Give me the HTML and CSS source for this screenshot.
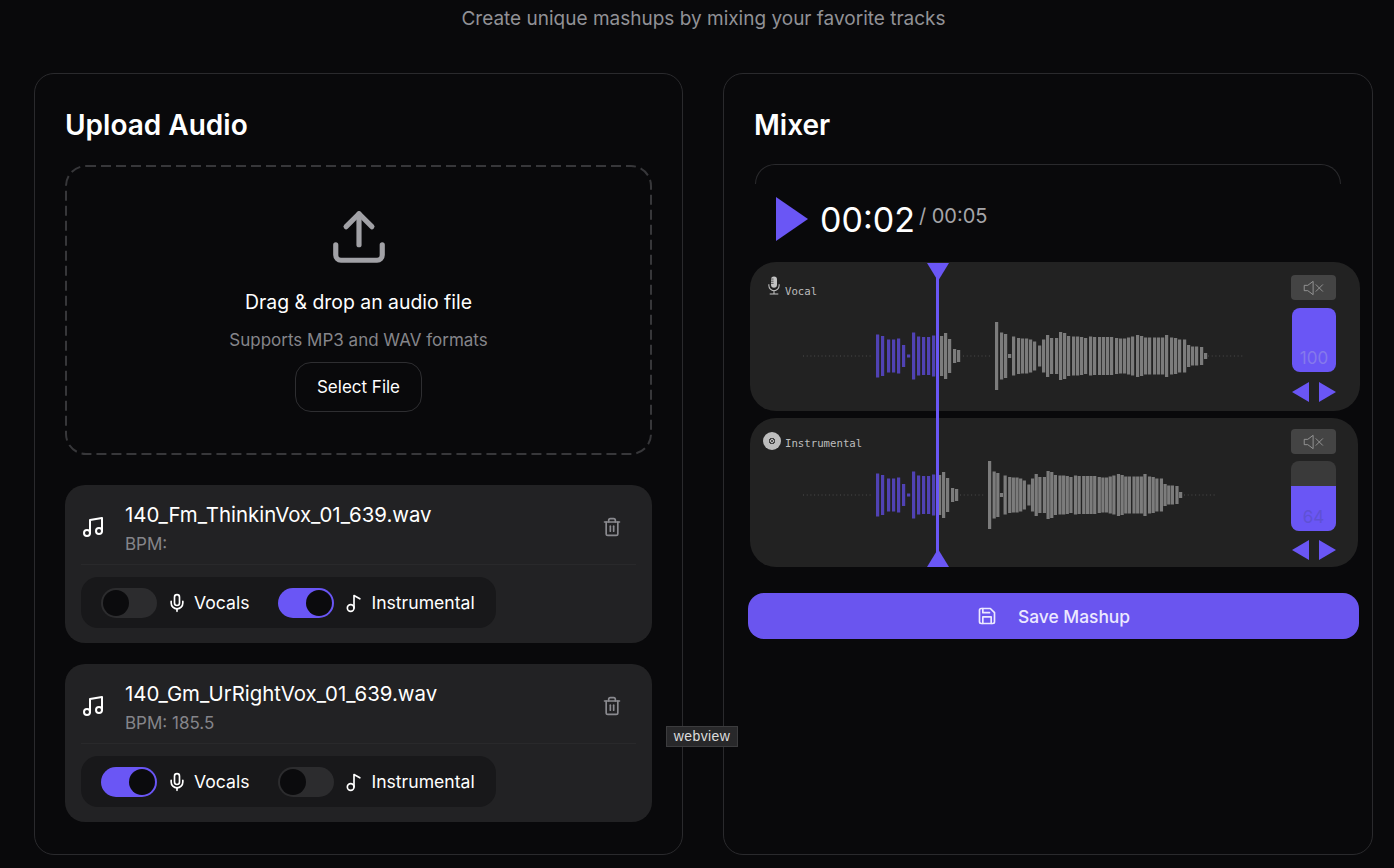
FILE: index.html
```html
<!DOCTYPE html>
<html>
  <head>
    <title>Mashup Maker</title>
    <link rel="stylesheet" href="styles.css">
  </head>
  <body>
    <p class="subtitle">Create unique mashups by mixing your favorite tracks</p>

    <div class="panels">
      <div class="panel">
        <h2>Upload Audio</h2>

        <div class="dropzone">
          <svg class="dash-border" viewBox="0 0 587 290"><rect x="1" y="1" width="585" height="288" rx="20"/></svg>
          <svg class="upload-icon" viewBox="0 0 24 24"><path d="M21 15v4a2 2 0 0 1-2 2H5a2 2 0 0 1-2-2v-4"/><polyline points="17 8 12 3 7 8"/><line x1="12" y1="3" x2="12" y2="15"/></svg>
          <div class="drop-title">Drag &amp; drop an audio file</div>
          <div class="drop-sub">Supports MP3 and WAV formats</div>
          <button class="select-btn">Select File</button>
        </div>

        <div class="file-card">
          <div class="file-head">
            <svg class="music-icon" viewBox="0 0 24 24"><path d="M9 18V5l12-2v13"/><circle cx="6" cy="18" r="3"/><circle cx="18" cy="16" r="3"/></svg>
            <div class="file-info">
              <div class="file-name">140_Fm_ThinkinVox_01_639.wav</div>
              <div class="file-bpm">BPM:</div>
            </div>
            <svg class="trash-icon" viewBox="0 0 24 24"><path d="M3 6h18"/><path d="M19 6v14a2 2 0 0 1-2 2H7a2 2 0 0 1-2-2V6"/><path d="M8 6V4a2 2 0 0 1 2-2h4a2 2 0 0 1 2 2v2"/><line x1="10" y1="11" x2="10" y2="17"/><line x1="14" y1="11" x2="14" y2="17"/></svg>
          </div>
          <div class="stems">
            <div class="stem">
              <span class="toggle"></span>
              <svg class="stem-icon" viewBox="0 0 24 24"><path d="M12 2a3 3 0 0 0-3 3v7a3 3 0 0 0 6 0V5a3 3 0 0 0-3-3Z"/><path d="M19 10v2a7 7 0 0 1-14 0v-2"/><line x1="12" y1="19" x2="12" y2="22"/></svg>
              <span>Vocals</span>
            </div>
            <div class="stem">
              <span class="toggle on"></span>
              <svg class="stem-icon" viewBox="0 0 24 24"><path d="M12 18V3l7 4"/><circle cx="8" cy="18" r="4"/></svg>
              <span>Instrumental</span>
            </div>
          </div>
        </div>

        <div class="file-card">
          <div class="file-head">
            <svg class="music-icon" viewBox="0 0 24 24"><path d="M9 18V5l12-2v13"/><circle cx="6" cy="18" r="3"/><circle cx="18" cy="16" r="3"/></svg>
            <div class="file-info">
              <div class="file-name">140_Gm_UrRightVox_01_639.wav</div>
              <div class="file-bpm">BPM: 185.5</div>
            </div>
            <svg class="trash-icon" viewBox="0 0 24 24"><path d="M3 6h18"/><path d="M19 6v14a2 2 0 0 1-2 2H7a2 2 0 0 1-2-2V6"/><path d="M8 6V4a2 2 0 0 1 2-2h4a2 2 0 0 1 2 2v2"/><line x1="10" y1="11" x2="10" y2="17"/><line x1="14" y1="11" x2="14" y2="17"/></svg>
          </div>
          <div class="stems">
            <div class="stem">
              <span class="toggle on"></span>
              <svg class="stem-icon" viewBox="0 0 24 24"><path d="M12 2a3 3 0 0 0-3 3v7a3 3 0 0 0 6 0V5a3 3 0 0 0-3-3Z"/><path d="M19 10v2a7 7 0 0 1-14 0v-2"/><line x1="12" y1="19" x2="12" y2="22"/></svg>
              <span>Vocals</span>
            </div>
            <div class="stem">
              <span class="toggle"></span>
              <svg class="stem-icon" viewBox="0 0 24 24"><path d="M12 18V3l7 4"/><circle cx="8" cy="18" r="4"/></svg>
              <span>Instrumental</span>
            </div>
          </div>
        </div>
      </div>

      <div class="panel mixer">
        <h2>Mixer</h2>
        <div class="mixer-top"></div>

        <div class="transport">
          <span class="play"></span>
          <span class="time-now">00:02</span>
          <span class="time-total">/ 00:05</span>
        </div>

        <div class="tracks">
          <div class="track vocal">
            <div class="track-main">
              <div class="track-label">
                <svg class="mic-small" viewBox="0 0 14 22"><rect x="3.5" y="0.5" width="7" height="13" rx="3.5" fill="#c4c4c4"/><path d="M1 9.5v1.5a6 6 0 0 0 12 0V9.5M7 17v3.5M2 20.8h10" fill="none" stroke="#c4c4c4" stroke-width="1.2"/><path d="M3.5 3.5h3M3.5 6h3M3.5 8.5h3" stroke="#222" stroke-width="0.8"/></svg>
                <span class="track-name">Vocal</span>
              </div>
              <canvas id="wave1" width="520" height="80"></canvas>
            </div>
            <div class="track-side">
              <div class="mute"><svg viewBox="0 0 24 18"><path d="M1 6h4l6-4.5v15L5 12H1z"/><path d="M14 5l8 8M22 5l-8 8"/></svg></div>
              <div class="volume"><div class="volume-fill" style="height: 100%"><span>100</span></div></div>
              <div class="pan"><span class="arrow-left"></span><span class="arrow-right"></span></div>
            </div>
          </div>

          <div class="track inst">
            <div class="track-main">
              <div class="track-label">
                <span class="disc"></span>
                <span class="track-name">Instrumental</span>
              </div>
              <canvas id="wave2" width="520" height="80"></canvas>
            </div>
            <div class="track-side">
              <div class="mute"><svg viewBox="0 0 24 18"><path d="M1 6h4l6-4.5v15L5 12H1z"/><path d="M14 5l8 8M22 5l-8 8"/></svg></div>
              <div class="volume"><div class="volume-fill" style="height: 64%"><span>64</span></div></div>
              <div class="pan"><span class="arrow-left"></span><span class="arrow-right"></span></div>
            </div>
          </div>

          <div class="playhead"></div>
        </div>

        <button class="save-btn">
          <svg viewBox="0 0 24 24"><path d="M19 21H5a2 2 0 0 1-2-2V5a2 2 0 0 1 2-2h11l5 5v11a2 2 0 0 1-2 2z"/><polyline points="17 21 17 13 7 13 7 21"/><polyline points="7 3 7 8 15 8"/></svg>
          Save Mashup
        </button>
      </div>
    </div>

    <div class="tooltip">webview</div>

    <script src="script.js"></script>
  </body>
</html>
```

FILE: styles.css
```css
* {
  box-sizing: border-box;
}
body {
  margin: 0;
  padding: 0 21px 14px 34px;
  background: #09090b;
  color: #fff;
  font-family: Inter, "Liberation Sans", sans-serif;
  overflow: hidden;
}
.subtitle {
  margin: 0 0 35px;
  line-height: 38px;
  font-size: 19px;
  color: #919196;
  text-align: center;
}
.panels {
  display: grid;
  grid-template-columns: 649px 650px;
  gap: 40px;
}
.panel {
  border: 1px solid #2a2a2d;
  border-radius: 20px;
  padding: 32px 30px;
}
.mixer {
  padding: 32px 31px;
}
h2 {
  margin: 0 0 21px;
  font-size: 28px;
  line-height: 38px;
  font-weight: 600;
}
.mixer h2 {
  margin: 0 0 20px -1px;
}

/* upload side */
.dropzone {
  position: relative;
  height: 290px;
  padding-top: 41px;
  display: flex;
  flex-direction: column;
  align-items: center;
  margin-bottom: 30px;
}
.dash-border {
  position: absolute;
  left: 0;
  top: 0;
  width: 100%;
  height: 100%;
  fill: none;
  stroke: #37373a;
  stroke-width: 2;
  stroke-dasharray: 10 5;
}
.upload-icon {
  width: 62px;
  height: 62px;
  fill: none;
  stroke: #a1a1a6;
  stroke-width: 2;
  stroke-linecap: round;
  stroke-linejoin: round;
}
.drop-title {
  margin-top: 20px;
  font-size: 19.4px;
  line-height: 28px;
  font-weight: 400;
}
.drop-sub {
  margin-top: 12px;
  font-size: 17px;
  line-height: 24px;
  color: #85858a;
}
.select-btn {
  margin-top: 10px;
  width: 127px;
  height: 50px;
  background: transparent;
  border: 1px solid #2e2e31;
  border-radius: 16px;
  color: #fff;
  font: 400 17px Inter, sans-serif;
}
.file-card {
  height: 158px;
  background: #222224;
  border-radius: 20px;
  padding: 15px 16px;
  margin-bottom: 21px;
}
.file-card:last-child {
  margin-bottom: 0;
}
.file-head {
  display: flex;
  align-items: center;
  gap: 20px;
  height: 65px;
  padding-right: 14px;
  padding-bottom: 10px;
  border-bottom: 1px solid #29292b;
  margin-bottom: 12px;
}
.music-icon {
  width: 24px;
  height: 24px;
  fill: none;
  stroke: #fff;
  stroke-width: 2;
  stroke-linecap: round;
  stroke-linejoin: round;
}
.file-info {
  flex: 1;
  padding-top: 2px;
}
.file-name {
  font-size: 20.4px;
  line-height: 28px;
  font-weight: 400;
}
.file-bpm {
  margin-top: 3px;
  font-size: 17px;
  line-height: 24px;
  color: #85858a;
}
.trash-icon {
  width: 20px;
  height: 20px;
  fill: none;
  stroke: #8a8a8f;
  stroke-width: 2;
  stroke-linecap: round;
  stroke-linejoin: round;
}
.stems {
  display: inline-flex;
  gap: 29px;
  height: 51px;
  padding: 0 21px 0 20px;
  background: #18181a;
  border-radius: 17px;
}
.stem {
  display: flex;
  align-items: center;
  font-size: 17.6px;
  font-weight: 400;
}
.toggle {
  display: flex;
  width: 56px;
  height: 30px;
  padding: 2px;
  margin-right: 10px;
  border-radius: 15px;
  background: #2c2c2e;
}
.toggle::after {
  content: "";
  width: 26px;
  height: 26px;
  border-radius: 50%;
  background: #0b0b0d;
}
.toggle.on {
  justify-content: flex-end;
  background: #6a56f5;
}
.stem-icon {
  width: 20px;
  height: 20px;
  margin-right: 7px;
  fill: none;
  stroke: #fff;
  stroke-width: 2;
  stroke-linecap: round;
  stroke-linejoin: round;
}

/* mixer side */
.mixer-top {
  height: 20px;
  border: 1px solid #2a2a2d;
  border-bottom: none;
  border-radius: 20px 20px 0 0;
}
.transport {
  display: flex;
  align-items: center;
  height: 78px;
  padding: 0 0 8px 21px;
}
.play {
  width: 0;
  height: 0;
  border-left: 32px solid #6a56f5;
  border-top: 22px solid transparent;
  border-bottom: 22px solid transparent;
  margin-right: 12px;
}
.time-now {
  font-size: 34px;
}
.time-total {
  margin: -7px 0 0 4px;
  font-size: 20px;
  color: #a5a5a9;
}
.tracks {
  position: relative;
  width: 610px;
  margin-left: -5px;
}
.track {
  display: flex;
  justify-content: space-between;
  height: 149px;
  background: #222222;
  border-radius: 26px;
  padding: 13px 24px 0 13px;
}
.track.inst {
  width: 608px;
  margin-top: 7px;
  padding: 11px 22px 0 13px;
}
.track-main {
  width: 520px;
}
.track-label {
  display: flex;
  align-items: flex-end;
  height: 21px;
  font: 10.7px "DejaVu Sans Mono", monospace;
  color: #bdbdbd;
}
.vocal .track-name {
  margin-bottom: -2px;
}
.inst .track-label {
  align-items: center;
  padding-top: 3px;
}
.inst .track-name {
  padding-top: 4px;
}
.mic-small {
  width: 12px;
  height: 21px;
  margin: 0 5px;
}
.disc {
  width: 18px;
  height: 18px;
  margin-right: 4px;
  border-radius: 50%;
  background: radial-gradient(circle, #555 0 1px, #bdbdbd 1px 2px, #444 2px 3px, #bdbdbd 3px);
}
canvas {
  display: block;
  width: 520px;
  height: 80px;
  filter: blur(0.5px);
}
.vocal canvas {
  margin-top: 20px;
}
.inst canvas {
  margin-top: 5px;
}
.track-side {
  width: 45px;
}
.mute {
  height: 25px;
  background: #444444;
  border-radius: 4px;
  display: flex;
  align-items: center;
  justify-content: center;
}
.mute svg {
  width: 22px;
  height: 16px;
  fill: none;
  stroke: #9c9c9c;
  stroke-width: 1;
}
.volume {
  height: 64px;
  margin: 8px 0 10px 1px;
  background: #3a3a3a;
  border-radius: 8px;
  overflow: hidden;
  display: flex;
  align-items: flex-end;
}
.inst .volume {
  height: 70px;
  margin: 7px 0 9px;
}
.volume-fill {
  width: 100%;
  background: #6a56f5;
  display: flex;
  align-items: flex-end;
  justify-content: center;
  padding-bottom: 4px;
  font-size: 17px;
  line-height: 20px;
  color: #8579ec;
}
.inst .volume-fill {
  color: #5f51d4;
}
.pan {
  display: flex;
  justify-content: space-between;
  padding-left: 1px;
}
.arrow-left,
.arrow-right {
  width: 0;
  height: 0;
  border-top: 10px solid transparent;
  border-bottom: 10px solid transparent;
}
.arrow-left {
  border-right: 17px solid #6a56f5;
}
.arrow-right {
  border-left: 17px solid #6a56f5;
}

/* sits over both tracks */
.playhead {
  position: absolute;
  left: 186px;
  top: 1px;
  bottom: 0;
  width: 3px;
  background: #6a56f5;
}
.playhead::before,
.playhead::after {
  content: "";
  position: absolute;
  left: -9.5px;
  border-left: 11px solid transparent;
  border-right: 11px solid transparent;
}
.playhead::before {
  top: 0;
  border-top: 18px solid #6a56f5;
}
.playhead::after {
  bottom: 0;
  border-bottom: 18px solid #6a56f5;
}
.save-btn {
  display: flex;
  align-items: center;
  justify-content: center;
  gap: 21px;
  width: 611px;
  height: 46px;
  margin: 26px 0 0 -7px;
  background: #6a55ef;
  border: none;
  border-radius: 16px;
  color: #ece9ff;
  font: 500 17.4px Inter, sans-serif;
}
.save-btn svg {
  width: 20px;
  height: 20px;
  fill: none;
  stroke: #ece9ff;
  stroke-width: 2;
  stroke-linecap: round;
  stroke-linejoin: round;
}
.tooltip {
  position: absolute;
  left: 666px;
  top: 726px;
  width: 72px;
  height: 21px;
  background: #28282a;
  border: 1px solid #3c3c3e;
  color: #dcdcdc;
  font: 14px/19px "Liberation Sans", sans-serif;
  letter-spacing: 0.4px;
  text-align: center;
}
```

FILE: script.js
```js
// page x of the canvas left edge, and of the playhead
var originX = 763;
var headX = 937;

// [x, height] of each bar, read off the vocal track
var firstPart = [[876,43],[881,40],[887,33],[892,33],[897,35],[902,22],[907,3],[912,47],[917,39],[922,38],[927,38],[932,41]];
var tailPart = [[940,40],[944,46],[948,34],[953,14],[957,12]];
var lastPart = [[995,68],[1000,47],[1004,44],[1008,4],[1012,39],[1017,36],[1021,35],[1025,35],[1029,33],[1033,29],[1038,21],
  [1042,33],[1046,42],[1050,36],[1055,36],[1059,48],[1063,46],[1067,40],[1072,39],[1076,39],[1080,38],[1084,36],[1089,39],
  [1093,38],[1098,38],[1102,38],[1106,38],[1110,38],[1115,36],[1119,35],[1123,35],[1127,37],[1131,39],[1136,42],[1140,40],
  [1144,37],[1148,37],[1153,37],[1157,37],[1161,37],[1165,42],[1170,37],[1174,36],[1178,33],[1183,33],[1187,22],[1191,19],
  [1195,19],[1200,18],[1204,6]];

function drawWave(id, tailShift, lastX, scale, dots) {
  var ctx = document.getElementById(id).getContext("2d");
  var mid = 40;

  ctx.fillStyle = "#4c4c4c";
  dots.forEach(function(d) {
    for (var x = d[0]; x < d[1]; x += 3.7) {
      ctx.fillRect(x - originX, mid - 0.5, 1, 1);
    }
  });

  function bar(x, h) {
    ctx.fillStyle = x < headX ? "#5042b4" : "#7c7c7c";
    ctx.fillRect(x - originX, mid - h / 2, 3.2, h);
  }
  firstPart.forEach(function(b) { bar(b[0], b[1]); });
  tailPart.forEach(function(b) { bar(b[0] + tailShift, b[1]); });
  lastPart.forEach(function(b) { bar(lastX + (b[0] - 995) * scale, b[1]); });
}

drawWave("wave1", 0, 995, 1, [[803,873],[963,992],[1208,1243]]);
drawWave("wave2", -2, 988, 0.914, [[803,873],[960,985],[1184,1215]]);
```
